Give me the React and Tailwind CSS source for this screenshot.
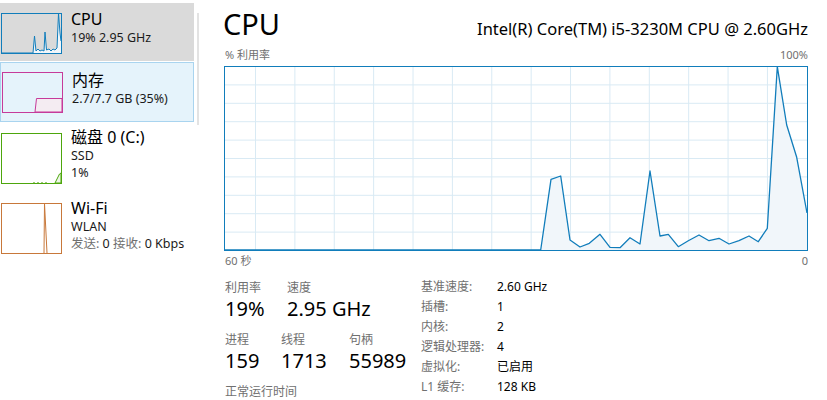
import React from "react";

const font = { fontFamily: '"Noto Sans", "Noto Sans CJK SC", sans-serif' };

const cpuPoints = [
  [0, 184], [316.7, 184], [327, 113.3], [336.7, 110], [346, 174], [356, 181],
  [365.3, 177.3], [376, 168.3], [386, 181.3], [396, 181.7], [406, 171.7], [416, 178],
  [426, 105], [436, 170], [444.3, 168.3], [454.3, 180.7], [464.3, 174.7], [475, 169],
  [485, 174.7], [495, 172.3], [505, 178], [515, 174.7], [525, 170], [534.3, 175.7],
  [543.3, 162.3], [553.3, 0.7], [562.7, 59], [572.7, 91.3], [583, 147],
];

function CpuChart() {
  const line = cpuPoints.map((p) => p.join(",")).join(" ");
  const area = line + " 583,184";
  const vlines = Array.from({ length: 14 }, (_, i) => 31 + i * 39.38);
  const hlines = Array.from({ length: 9 }, (_, i) => (i + 1) * 18.4);
  return (
    <svg width="584" height="185" viewBox="0 0 584 185" className="block">
      {vlines.map((x) => (
        <line key={"v" + x} x1={x + 0.5} y1="0" x2={x + 0.5} y2="184" stroke="#d9eaf4" strokeWidth="1" />
      ))}
      {hlines.map((y) => (
        <line key={"h" + y} x1="0" y1={y + 0.5} x2="583" y2={y + 0.5} stroke="#d9eaf4" strokeWidth="1" />
      ))}
      <polygon points={area} fill="#f1f6fa" />
      <polyline points={line} fill="none" stroke="#117dbb" strokeWidth="1.3" strokeLinejoin="round" />
      <rect x="0.5" y="0.5" width="583" height="184" fill="none" stroke="#117dbb" strokeWidth="1" />
    </svg>
  );
}

function Thumb({ color, h, children }) {
  return (
    <svg width="61" height={h + 1} viewBox={`0 0 61 ${h + 1}`} className="block shrink-0">
      {children}
      <rect x="0.5" y="0.5" width="60" height={h} fill="none" stroke={color} strokeWidth="1" />
    </svg>
  );
}

function SideItem({ thumb, thumbTop, textTop, title, lines, className }) {
  return (
    <div className={"flex items-start " + className}>
      <div style={{ marginTop: thumbTop }} className="ml-px">{thumb}</div>
      <div style={{ marginTop: textTop }} className="ml-[9px]">
        <div className="text-[16px] leading-[20px] text-[#000]">{title}</div>
        {lines.map((l, i) => (
          <div key={i} className="text-[12.5px] leading-[17px] text-[#1a1a1a] whitespace-nowrap">{l}</div>
        ))}
      </div>
    </div>
  );
}

function Stat({ label, value, w }) {
  return (
    <div className={w}>
      <div className="text-[12px] leading-[16px] text-[#707070]">{label}</div>
      <div className="text-[20px] leading-[26px] text-[#000] whitespace-nowrap">{value}</div>
    </div>
  );
}

const specs = [
  ["基准速度:", "2.60 GHz"],
  ["插槽:", "1"],
  ["内核:", "2"],
  ["逻辑处理器:", "4"],
  ["虚拟化:", "已启用"],
  ["L1 缓存:", "128 KB"],
];

export default function App() {
  return (
    <div style={font} className="flex w-[827px] h-[400px] bg-white overflow-hidden">
      {/* sidebar */}
      <div className="flex shrink-0">
        <div className="w-[194px] flex flex-col pt-[3px]">
          <SideItem
            className="h-[58px] bg-[#dadada]"
            thumbTop={10}
            textTop={6}
            title="CPU"
            lines={["19% 2.95 GHz"]}
            thumb={
              <Thumb color="#117dbb" h={40}>
                <polygon
                  points="0,40 32,40 33.5,23 35,38 37,36 39,38 41,37 43,38 44,19 45.5,37 48,36 50,38 52,36 54,37 56,35 57.5,0.5 59,20 60,28 60,40"
                  fill="#f1f6fa"
                />
                <polyline
                  points="0,40 32,40 33.5,23 35,38 37,36 39,38 41,37 43,38 44,19 45.5,37 48,36 50,38 52,36 54,37 56,35 57.5,0.5 59,20 60,28"
                  fill="none"
                  stroke="#117dbb"
                  strokeWidth="1"
                />
              </Thumb>
            }
          />
          <SideItem
            className="h-[60px] mt-px bg-[#e5f3fb] border border-[#a9d4ef]"
            thumbTop={9}
            textTop={7}
            title="内存"
            lines={["2.7/7.7 GB (35%)"]}
            thumb={
              <Thumb color="#c63a9a" h={40}>
                <polygon points="33,40 34.5,26.5 60,26.5 60,40" fill="#f4ecf2" stroke="#c63a9a" strokeWidth="1" />
              </Thumb>
            }
          />
          <SideItem
            className="h-[70px]"
            thumbTop={11}
            textTop={5}
            title="磁盘 0 (C:)"
            lines={["SSD", "1%"]}
            thumb={
              <Thumb color="#4da60c" h={50}>
                <polygon points="54,50 58.5,41 60,40 60,50" fill="#eef6e8" stroke="#4da60c" strokeWidth="1" />
                <line x1="32" y1="49.5" x2="46" y2="49.5" stroke="#9cc97a" strokeWidth="1" strokeDasharray="2 2" />
              </Thumb>
            }
          />
          <SideItem
            className="h-[70px]"
            thumbTop={11}
            textTop={6}
            title="Wi-Fi"
            lines={[
              "WLAN",
              <span key="w">
                <span className="text-[#707070]">发送:</span> 0 <span className="text-[#707070]">接收:</span> 0 Kbps
              </span>,
            ]}
            thumb={
              <Thumb color="#c8783a" h={50}>
                <polyline points="43,50 43.5,0.5 46,50" fill="none" stroke="#c8783a" strokeWidth="1" />
              </Thumb>
            }
          />
        </div>
        <div className="w-[3px]" />
        <div className="w-[2px] h-[112px] mt-[13px] bg-[#e3e3e3]" />
      </div>

      {/* main */}
      <div className="flex-1 flex flex-col pl-[24px] pr-[20px]">
        <div className="flex items-baseline justify-between pt-[6px] h-[48px]">
          <div className="text-[29px] leading-[36px] text-[#000]">CPU</div>
          <div className="text-[16.5px] leading-[20px] text-[#000] whitespace-nowrap">
            Intel(R) Core(TM) i5-3230M CPU @ 2.60GHz
          </div>
        </div>
        <div className="flex justify-between text-[11px] leading-[14px] text-[#707070] pl-[2px]">
          <span>% 利用率</span>
          <span>100%</span>
        </div>
        <div className="mt-[4px] ml-px">
          <CpuChart />
        </div>
        <div className="flex justify-between text-[11px] leading-[14px] text-[#707070] pl-[2px] mt-[3px]">
          <span>60 秒</span>
          <span>0</span>
        </div>

        <div className="flex mt-[9px] pl-[2px]">
          <div className="w-[196px] pt-[3px] flex flex-col gap-[10px]">
            <div className="flex">
              <Stat w="w-[62px]" label="利用率" value="19%" />
              <Stat label="速度" value="2.95 GHz" />
            </div>
            <div className="flex">
              <Stat w="w-[56px]" label="进程" value="159" />
              <Stat w="w-[68px]" label="线程" value="1713" />
              <Stat label="句柄" value="55989" />
            </div>
            <div className="text-[12px] leading-[16px] text-[#707070]">正常运行时间</div>
          </div>
          <div className="flex flex-col text-[12px] leading-[20px]">
            {specs.map(([k, v]) => (
              <div key={k} className="flex">
                <span className="w-[76px] text-[#707070] whitespace-nowrap">{k}</span>
                <span className="text-[#000]">{v}</span>
              </div>
            ))}
          </div>
        </div>
      </div>
    </div>
  );
}
